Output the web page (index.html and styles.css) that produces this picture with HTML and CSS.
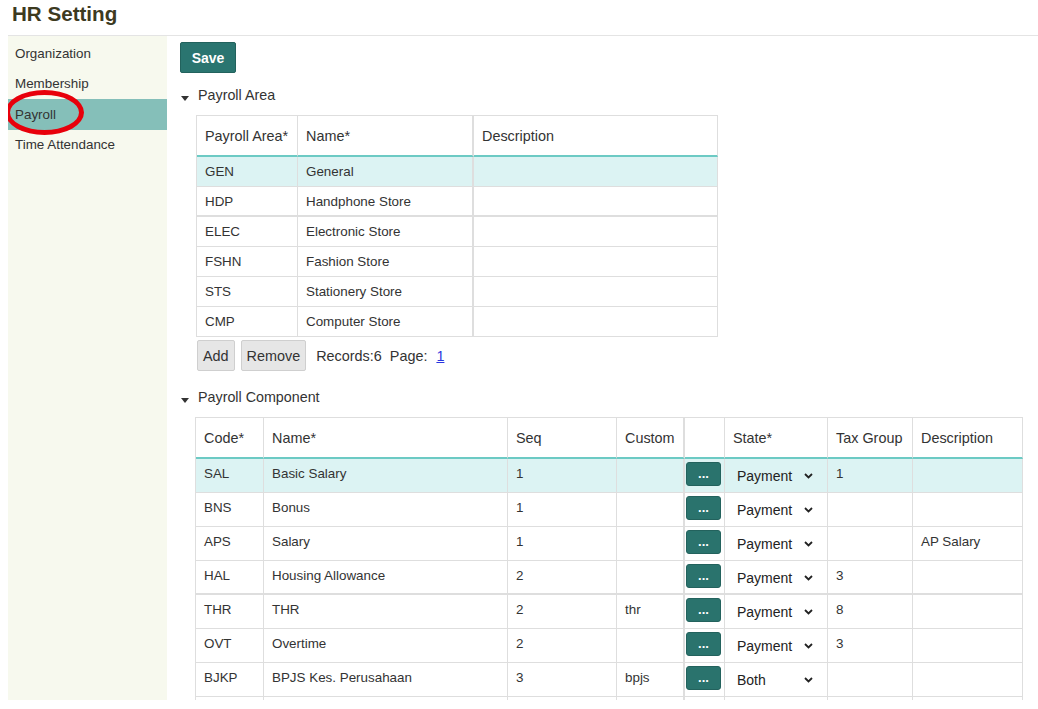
FILE: index.html
```html
<!DOCTYPE html>
<html>
<head>
<meta charset="utf-8">
<title>HR Setting</title>
<link rel="stylesheet" href="styles.css">
</head>
<body>
<div class="app">
  <header class="page-head"><h1 class="title">HR Setting</h1></header>
  <div class="layout">
    <nav class="side">
      <a class="nav-item">Organization</a>
      <a class="nav-item">Membership</a>
      <a class="nav-item active">Payroll</a>
      <a class="nav-item">Time Attendance</a>
      <span class="mark"></span>
    </nav>
    <main class="main">
      <button class="btn-save">Save</button>

      <div class="section-title"><span class="caret"></span>Payroll Area</div>
      <table class="grid area">
        <colgroup><col class="a1"><col class="a2"><col class="a3"></colgroup>
        <thead>
          <tr><th>Payroll Area*</th><th>Name*</th><th>Description</th></tr>
        </thead>
        <tbody>
          <tr class="sel"><td>GEN</td><td>General</td><td></td></tr>
          <tr class="split"><td>HDP</td><td>Handphone Store</td><td></td></tr>
          <tr><td>ELEC</td><td>Electronic Store</td><td></td></tr>
          <tr><td>FSHN</td><td>Fashion Store</td><td></td></tr>
          <tr><td>STS</td><td>Stationery Store</td><td></td></tr>
          <tr><td>CMP</td><td>Computer Store</td><td></td></tr>
        </tbody>
      </table>
      <div class="pager">
        <button class="btn">Add</button>
        <button class="btn">Remove</button>
        <span class="records">Records:6</span>
        <span class="page-lbl">Page:</span>
        <a class="page-link" href="#">1</a>
      </div>

      <div class="section-title comp-title"><span class="caret"></span>Payroll Component</div>
      <table class="grid comp">
        <colgroup><col class="b1"><col class="b2"><col class="b3"><col class="b4"><col class="b5"><col class="b6"><col class="b7"><col class="b8"></colgroup>
        <thead>
          <tr><th>Code*</th><th>Name*</th><th>Seq</th><th>Custom</th><th></th><th>State*</th><th>Tax Group</th><th>Description</th></tr>
        </thead>
        <tbody>
          <tr class="sel"><td>SAL</td><td>Basic Salary</td><td>1</td><td></td><td class="act"><button class="dots">...</button></td><td class="state"><div class="select"><span>Payment</span><svg class="chev" width="9" height="6" viewBox="0 0 9 6"><polyline points="1,1 4.5,4.5 8,1" fill="none" stroke="#222" stroke-width="1.8"/></svg></div></td><td>1</td><td></td></tr>
          <tr><td>BNS</td><td>Bonus</td><td>1</td><td></td><td class="act"><button class="dots">...</button></td><td class="state"><div class="select"><span>Payment</span><svg class="chev" width="9" height="6" viewBox="0 0 9 6"><polyline points="1,1 4.5,4.5 8,1" fill="none" stroke="#222" stroke-width="1.8"/></svg></div></td><td></td><td></td></tr>
          <tr><td>APS</td><td>Salary</td><td>1</td><td></td><td class="act"><button class="dots">...</button></td><td class="state"><div class="select"><span>Payment</span><svg class="chev" width="9" height="6" viewBox="0 0 9 6"><polyline points="1,1 4.5,4.5 8,1" fill="none" stroke="#222" stroke-width="1.8"/></svg></div></td><td></td><td>AP Salary</td></tr>
          <tr class="split"><td>HAL</td><td>Housing Allowance</td><td>2</td><td></td><td class="act"><button class="dots">...</button></td><td class="state"><div class="select"><span>Payment</span><svg class="chev" width="9" height="6" viewBox="0 0 9 6"><polyline points="1,1 4.5,4.5 8,1" fill="none" stroke="#222" stroke-width="1.8"/></svg></div></td><td>3</td><td></td></tr>
          <tr><td>THR</td><td>THR</td><td>2</td><td>thr</td><td class="act"><button class="dots">...</button></td><td class="state"><div class="select"><span>Payment</span><svg class="chev" width="9" height="6" viewBox="0 0 9 6"><polyline points="1,1 4.5,4.5 8,1" fill="none" stroke="#222" stroke-width="1.8"/></svg></div></td><td>8</td><td></td></tr>
          <tr><td>OVT</td><td>Overtime</td><td>2</td><td></td><td class="act"><button class="dots">...</button></td><td class="state"><div class="select"><span>Payment</span><svg class="chev" width="9" height="6" viewBox="0 0 9 6"><polyline points="1,1 4.5,4.5 8,1" fill="none" stroke="#222" stroke-width="1.8"/></svg></div></td><td>3</td><td></td></tr>
          <tr><td>BJKP</td><td>BPJS Kes. Perusahaan</td><td>3</td><td>bpjs</td><td class="act"><button class="dots">...</button></td><td class="state"><div class="select"><span>Both</span><svg class="chev" width="9" height="6" viewBox="0 0 9 6"><polyline points="1,1 4.5,4.5 8,1" fill="none" stroke="#222" stroke-width="1.8"/></svg></div></td><td></td><td></td></tr>
          <tr><td></td><td></td><td></td><td></td><td></td><td></td><td></td><td></td></tr>
        </tbody>
      </table>
    </main>
  </div>
</div>
</body>
</html>
```

FILE: styles.css
```css
html, body {
  margin: 0;
  padding: 0;
  background: #fff;
}
body {
  font-family: "Liberation Sans", Arial, sans-serif;
  color: #333;
}
.app {
  padding-left: 8px;
}
.page-head {
  height: 35px;
  border-bottom: 1px solid #e4e4e4;
}
.title {
  margin: 0;
  padding-left: 4px;
  font-size: 20.6px;
  line-height: 27px;
  font-weight: bold;
  color: #3d3a1f;
}
.layout {
  display: flex;
  height: 664px;
  overflow: hidden;
}
.side {
  position: relative;
  flex: none;
  width: 159px;
  padding-top: 2px;
  background: #f7f9ee;
}
.nav-item {
  display: flex;
  align-items: center;
  height: 30.5px;
  padding-left: 7px;
  font-size: 13.4px;
  color: #333;
  text-decoration: none;
}
.nav-item.active {
  background: #85bfb9;
}
.mark {
  position: absolute;
  left: -3px;
  top: 54px;
  width: 79px;
  height: 45px;
  border: 5px solid #e8000b;
  border-radius: 50%;
  box-sizing: border-box;
}
.main {
  flex: 1;
  min-width: 0;
  overflow: hidden;
  padding: 6px 0 0 13px;
  display: flex;
  flex-direction: column;
  align-items: flex-start;
}
.main > * {
  flex-shrink: 0;
}
.btn-save {
  height: 31px;
  width: 56px;
  padding: 0;
  background: #2a7570;
  color: #fff;
  font-family: "Liberation Sans", Arial, sans-serif;
  font-size: 14px;
  font-weight: bold;
  border: 1px solid #22625d;
  border-radius: 2px;
}
.section-title {
  margin-top: 12px;
  height: 20px;
  display: flex;
  align-items: center;
  padding-left: 1px;
  font-size: 14.3px;
  color: #333;
}
.comp-title {
  margin-top: 16px;
}
.caret {
  width: 0;
  height: 0;
  border-left: 4.5px solid transparent;
  border-right: 4.5px solid transparent;
  border-top: 5px solid #333;
  margin-right: 9px;
  margin-top: 6px;
}
.grid {
  border-collapse: separate;
  border-spacing: 0;
  table-layout: fixed;
  border-top: 1px solid #dedede;
  border-left: 1px solid #dedede;
  margin-top: 10px;
}
.grid th,
.grid td {
  box-sizing: border-box;
  border-right: 1px solid #dedede;
  border-bottom: 1px solid #dedede;
  padding: 0 8px;
  text-align: left;
  white-space: nowrap;
  overflow: hidden;
}
.grid th {
  font-weight: normal;
  font-size: 14.4px;
  border-bottom: 2px solid #6ccac4;
  vertical-align: middle;
}
.grid td {
  font-size: 13.4px;
}
.grid thead tr {
  height: 41px;
}
.grid .sel td {
  background: #dcf3f3;
}

/* payroll area table */
.area {
  width: 522px;
  margin-left: 16px;
}
.area col.a1 { width: 101px; }
.area col.a2 { width: 176px; }
.area col.a3 { width: 244px; }
.area tbody tr {
  height: 30px;
}
.area td {
  vertical-align: middle;
}
.area th:nth-child(2),
.area td:nth-child(2) {
  border-right-width: 2px;
}
.area .split td {
  border-bottom-width: 2px;
}

/* pager */
.pager {
  display: flex;
  align-items: center;
  gap: 6px;
  margin-top: 3px;
  margin-left: 17px;
  font-size: 14.4px;
}
.btn {
  height: 31px;
  padding: 0 5px;
  background: #e6e6e6;
  border: 1px solid #cfcfcf;
  border-radius: 2px;
  font-family: "Liberation Sans", Arial, sans-serif;
  font-size: 14.4px;
  color: #333;
}
.records {
  margin-left: 4px;
}
.page-lbl {
  margin-left: 2px;
}
.page-link {
  margin-left: 3px;
  color: #2a35e0;
  text-decoration: underline;
}

/* payroll component table */
.comp {
  width: 828px;
  margin-left: 15px;
}
.comp col.b1 { width: 68px; }
.comp col.b2 { width: 244px; }
.comp col.b3 { width: 109px; }
.comp col.b4 { width: 68px; }
.comp col.b5 { width: 40px; }
.comp col.b6 { width: 103px; }
.comp col.b7 { width: 85px; }
.comp col.b8 { width: 110px; }
.comp th:nth-child(4),
.comp td:nth-child(4) {
  border-right-width: 2px;
}
.comp tbody tr {
  height: 34px;
}
.comp td {
  vertical-align: top;
  padding-top: 7px;
  line-height: 16px;
}
.comp .split td {
  border-bottom-width: 2px;
}
.comp td.act {
  padding: 3px 0 0 1px;
}
.dots {
  display: block;
  width: 35px;
  height: 24px;
  padding: 0;
  background: #2a736d;
  border: 1px solid #23625d;
  border-radius: 3px;
  color: #fff;
  font-family: "Liberation Sans", Arial, sans-serif;
  font-size: 13px;
  font-weight: bold;
  line-height: 20px;
}
.comp td.state {
  padding: 5px 0 0 0;
}
.select {
  display: flex;
  align-items: center;
  justify-content: space-between;
  width: 76px;
  height: 24px;
  padding-left: 12px;
  font-size: 14px;
  color: #222;
}
.chev {
  display: block;
}
```
